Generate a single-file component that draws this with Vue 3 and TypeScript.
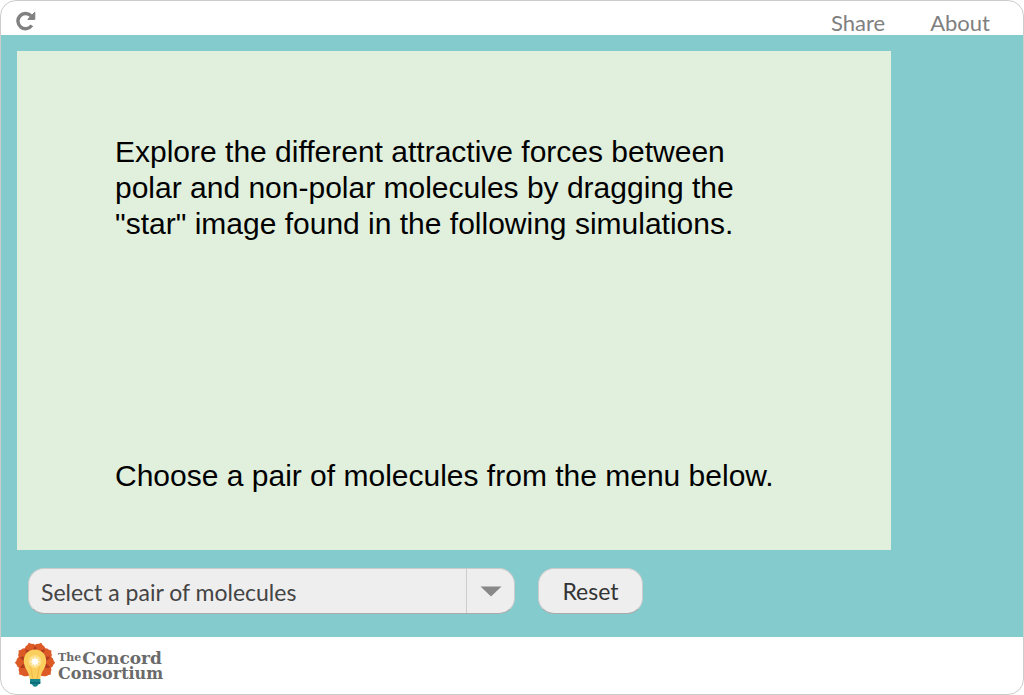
<script setup lang="ts">
import { ref } from 'vue'

const placeholder = 'Select a pair of molecules'
const pair = ref<string>(placeholder)
const petals: number[] = [-128, -92, -55, -18, 18, 55, 92, 128]
const folds: number[] = [-110, -73, -36, 0, 36, 73, 110]

function reset(): void {
  pair.value = placeholder
}
</script>

<template>
  <div class="interactive">
    <header class="top-bar">
      <button class="reload" type="button" aria-label="Reload" @click="reset">
        <svg viewBox="0 0 20 20" width="20" height="20" aria-hidden="true">
          <path d="M15.8 14.4A7.6 7.6 0 1 1 15 4.8" fill="none" stroke="#808080" stroke-width="3.4" />
          <path d="M18.8 1.2V8.4H11.8Z" fill="#808080" stroke="#808080" stroke-width="1" stroke-linejoin="round" />
        </svg>
      </button>
      <nav class="links">
        <a href="#share">Share</a>
        <a href="#about">About</a>
      </nav>
    </header>

    <main class="content">
      <section class="stage">
        <p class="intro">
          Explore the different attractive forces between<br />
          polar and non-polar molecules by dragging the<br />
          "star" image found in the following simulations.
        </p>
        <p class="prompt">Choose a pair of molecules from the menu below.</p>
      </section>
      <div class="controls">
        <div class="picker">
          <select v-model="pair" aria-label="Pair of molecules">
            <option :value="placeholder">{{ placeholder }}</option>
          </select>
          <span class="arrow" aria-hidden="true">
            <svg viewBox="0 0 22 11" width="22" height="11"><path d="M0.5 0.5H21.5L11 10.5Z" fill="#888" /></svg>
          </span>
        </div>
        <button class="reset" type="button" @click="reset">Reset</button>
      </div>
    </main>

    <footer class="bottom-bar">
      <a class="brand" href="#concord" aria-label="The Concord Consortium">
        <svg viewBox="0 0 42 46" width="42" height="46" aria-hidden="true">
          <g fill="#dc5a26">
            <path
              v-for="angle in petals"
              :key="angle"
              d="M21 22L13.5 9.5Q14.2 5.5 17 3.2Q19.5 2.8 21 0.8Q22.5 2.8 25 3.2Q27.8 5.5 28.5 9.5Z"
              :transform="`rotate(${angle} 21 21)`"
            />
          </g>
          <g fill="#b23c20">
            <path
              v-for="angle in folds"
              :key="angle"
              d="M21 5Q23 7 23.4 12H18.6Q19 7 21 5Z"
              :transform="`rotate(${angle} 21 21)`"
            />
          </g>
          <path d="M21 8.5C14.2 8.5 9.8 13.6 9.8 19.8C9.8 28 15.4 30 15.6 38H26.4C26.6 30 32.2 28 32.2 19.8C32.2 13.6 27.8 8.5 21 8.5Z" fill="#fbcf5e" />
          <path d="M16 23L19 38M26 23L23 38" stroke="#f5b848" stroke-width="1" />
          <circle cx="21" cy="20.5" r="6.5" fill="#fde08a" />
          <path d="M21 15.5L22 18.3L24.6 17.1L23.4 19.7L26.2 20.7L23.4 21.7L24.6 24.3L22 23.1L21 25.9L20 23.1L17.4 24.3L18.6 21.7L15.8 20.7L18.6 19.7L17.4 17.1L20 18.3Z" fill="#fff" />
          <path d="M16 38H26.4V42Q26.4 43.2 24.2 43.6Q23.5 45.8 21.2 45.8Q18.8 45.8 18.2 43.6Q16 43.2 16 42Z" fill="#16868b" />
          <path d="M16 41.8H26.4" stroke="#0b5f70" stroke-width="1.2" />
        </svg>
        <span class="name">
          <span class="line"><span class="the">The</span><span class="concord">Concord</span></span>
          <span class="line">Consortium</span>
        </span>
      </a>
    </footer>
  </div>
</template>

<style scoped>
.interactive {
  box-sizing: border-box;
  min-height: 100vh;
  display: flex;
  flex-direction: column;
  border: 1px solid #ccc;
  border-radius: 16px;
  overflow: hidden;
  background: #fff;
  font-family: Lato, sans-serif;
}

.top-bar {
  display: flex;
  justify-content: space-between;
  height: 34px;
  padding: 0 33px 0 15px;
}

.reload {
  display: flex;
  align-self: center;
  margin-top: 6px;
  padding: 0;
  border: 0;
  background: none;
}

.links {
  display: flex;
  gap: 45px;
  padding-top: 8px;
}

.links a {
  color: #808080;
  font-size: 22px;
  line-height: 28px;
  text-decoration: none;
}

.content {
  flex: 1;
  padding: 16px 132px 16px 16px;
  background: #84cbce;
}

.stage {
  box-sizing: border-box;
  height: 499px;
  padding: 83px 98px 0;
  background: #e1efdd;
  color: #000;
  font-family: "Liberation Sans", Arial, sans-serif;
  font-size: 30px;
  line-height: 36px;
  white-space: nowrap;
}

.stage p {
  margin: 0;
}

.stage .prompt {
  margin-top: 216px;
}

.controls {
  display: flex;
  gap: 23px;
  padding: 18px 11px 0;
}

.picker,
.reset {
  box-sizing: border-box;
  height: 46px;
  border: 1px solid #ccc;
  border-bottom-color: #aaa;
  border-radius: 16px;
  background: #eee;
  color: #444;
}

.picker {
  display: grid;
  grid-template-columns: 1fr 48px;
  width: 487px;
  overflow: hidden;
}

.picker select {
  grid-area: 1 / 1 / 2 / 3;
  appearance: none;
  border: 0;
  padding: 2px 60px 0 12px;
  background: transparent;
  color: #444;
  font-family: Lato, sans-serif;
  font-size: 23px;
}

.arrow {
  grid-area: 1 / 2;
  display: flex;
  align-items: center;
  justify-content: center;
  border-left: 1px solid #ccc;
  pointer-events: none;
}

.reset {
  width: 105px;
  padding: 0;
  color: #333;
  font-family: Lato, sans-serif;
  font-size: 23px;
}

.bottom-bar {
  height: 57px;
  padding: 0 13px;
}

.brand {
  display: inline-flex;
  gap: 2px;
  padding-top: 4px;
  color: #6a6a6a;
  text-decoration: none;
}

.name {
  display: flex;
  flex-direction: column;
  padding-top: 9px;
  font-family: "DejaVu Serif", serif;
  font-size: 16px;
  font-weight: 700;
  line-height: 16px;
}

.line {
  display: flex;
  gap: 1px;
}

.the {
  font-size: 11px;
}

.concord {
  font-size: 17px;
}
</style>

<style>
body {
  margin: 0;
  background: #fff;
}
</style>
